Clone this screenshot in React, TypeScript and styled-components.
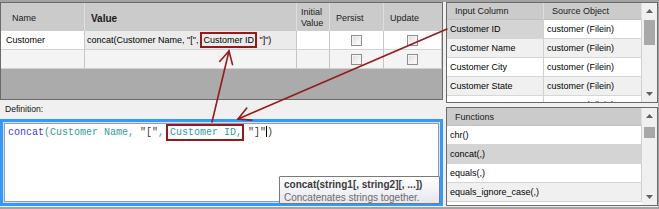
import React from 'react';
import styled, { createGlobalStyle } from 'styled-components';

const GlobalStyle = createGlobalStyle`
  html, body {
    margin: 0;
    padding: 0;
    background: #f0f0f0;
  }
  body {
    font-family: "Liberation Sans", Arial, sans-serif;
  }
`;

const RED = '#951b1b';

export default function App() {
  return (
    <>
      <GlobalStyle />
      <Frame>
        <LeftColumn>
          <FieldGrid>
            <HeadCell $pad={11}>Name</HeadCell>
            <HeadCell $pad={6} $bold>Value</HeadCell>
            <HeadCell $pad={4}>Initial<br />Value</HeadCell>
            <HeadCell $pad={6}>Persist</HeadCell>
            <HeadCell $pad={6}>Update</HeadCell>

            <BodyCell $bg="#ffffff" $pad={5}>Customer</BodyCell>
            <BodyCell $bg="#ebebeb" $pad={2}>
              concat(Customer Name, "[",<Mark>Customer ID</Mark> "]")
            </BodyCell>
            <BodyCell $bg="#ffffff" />
            <BodyCell $bg="#ffffff" $center><CheckBox /></BodyCell>
            <BodyCell $bg="#ffffff" $center><CheckBox /></BodyCell>

            <BodyCell $bg="#f4f4f4" />
            <BodyCell $bg="#f4f4f4" />
            <BodyCell $bg="#f4f4f4" />
            <BodyCell $bg="#f4f4f4" $center><CheckBox /></BodyCell>
            <BodyCell $bg="#f4f4f4" $center><CheckBox /></BodyCell>
          </FieldGrid>

          <DefLabel>Definition:</DefLabel>

          <DefBox>
            <CodeLine>
              <Kw>concat</Kw>
              <Ident>(Customer Name, </Ident>
              <Str>"["</Str>
              <Ident>,</Ident>
              <CodeMark><Ident>Customer ID,</Ident></CodeMark>
              <Str>"]"</Str>
              <Caret />
              <Str>)</Str>
            </CodeLine>
            <Tooltip>
              <TipTitle>concat(string1[, string2][, ...])</TipTitle>
              <TipText>Concatenates strings together.</TipText>
            </Tooltip>
          </DefBox>
        </LeftColumn>

        <RightColumn>
          <SidePanel $height={101}>
            <SideTable $cols="97px 98px" $head={17} $row={19}>
              <SideHead>Input Column</SideHead>
              <SideHead>Source Object</SideHead>

              <SideCell $bg="#d4d4d4">Customer ID</SideCell>
              <SideCell $bg="#ffffff">customer (Filein)</SideCell>
              <SideCell $bg="#f0f0f0">Customer Name</SideCell>
              <SideCell $bg="#f0f0f0">customer (Filein)</SideCell>
              <SideCell $bg="#ffffff">Customer City</SideCell>
              <SideCell $bg="#ffffff">customer (Filein)</SideCell>
              <SideCell $bg="#f0f0f0">Customer State</SideCell>
              <SideCell $bg="#f0f0f0">customer (Filein)</SideCell>
              <SideCell $bg="#ffffff">Customer ZIP</SideCell>
              <SideCell $bg="#ffffff">customer (Filein)</SideCell>
            </SideTable>
            <ScrollBar thumbTop={17} thumbHeight={25} />
          </SidePanel>

          <SidePanel $height={99}>
            <SideTable $cols="1fr" $head={18} $row={19}>
              <SideHead>Functions</SideHead>
              <SideCell $bg="#ffffff">chr()</SideCell>
              <SideCell $bg="#d4d4d4">concat(,)</SideCell>
              <SideCell $bg="#ffffff">equals(,)</SideCell>
              <SideCell $bg="#f0f0f0">equals_ignore_case(,)</SideCell>
            </SideTable>
            <ScrollBar thumbTop={19} thumbHeight={11} />
          </SidePanel>
        </RightColumn>

        <Arrows width="659" height="209" viewBox="0 0 659 209">
          <g stroke={RED} strokeWidth="1.6" fill="none" strokeLinecap="round">
            <line x1="212" y1="122" x2="229" y2="51" />
            <polyline points="219.7,61.5 229,51 232.5,64.6" />
            <line x1="447" y1="29" x2="238" y2="119" />
            <polyline points="251.9,120.1 238,119 246.8,108.1" />
          </g>
        </Arrows>
      </Frame>
    </>
  );
}

function CheckBox() {
  return <Box />;
}

function ScrollBar({ thumbTop, thumbHeight }: { thumbTop: number; thumbHeight: number }) {
  return (
    <Scroll>
      <ScrollArrow>
        <svg width="7" height="4" viewBox="0 0 7 4"><polygon points="0,4 3.5,0 7,4" fill="#606060" /></svg>
      </ScrollArrow>
      <Track>
        <Thumb style={{ top: thumbTop - 16, height: thumbHeight }} />
      </Track>
      <ScrollArrow>
        <svg width="7" height="4" viewBox="0 0 7 4"><polygon points="0,0 3.5,4 7,0" fill="#606060" /></svg>
      </ScrollArrow>
    </Scroll>
  );
}

const Frame = styled.div`
  position: relative;
  width: 659px;
  height: 209px;
  box-sizing: border-box;
  border-top: 2px solid #a3a3a3;
  border-right: 1px solid #a3a3a3;
  border-bottom: 2px solid #a3a3a3;
  padding-bottom: 1px;
  display: grid;
  grid-template-columns: 443px 212px;
  column-gap: 3px;
  background: #f0f0f0;
  font-family: "Liberation Sans", Arial, sans-serif;
  font-size: 9px;
  color: #000;
  overflow: hidden;
`;

const LeftColumn = styled.div`
  display: flex;
  flex-direction: column;
  min-height: 0;
`;

const RightColumn = styled.div`
  display: flex;
  flex-direction: column;
  gap: 4px;
  min-height: 0;
`;

const FieldGrid = styled.div`
  height: 98px;
  box-sizing: border-box;
  border: 1px solid #6a6a6a;
  background: #ababab;
  display: grid;
  grid-template-columns: 84px 212px 33px 54px 1fr;
  grid-template-rows: 28px 19px 19px;
  align-content: start;
  overflow: hidden;
`;

const HeadCell = styled.div<{ $pad: number; $bold?: boolean }>`
  display: flex;
  align-items: center;
  padding: 2px 0 0 ${p => p.$pad}px;
  background: #cbcbcb;
  border-right: 1px solid #dedede;
  font-size: ${p => (p.$bold ? 10 : 9)}px;
  font-weight: ${p => (p.$bold ? 700 : 400)};
  line-height: 11px;
  color: #1a1a1a;
  &:nth-child(5) {
    border-right: none;
  }
`;

const BodyCell = styled.div<{ $bg: string; $pad?: number; $center?: boolean }>`
  display: flex;
  align-items: center;
  justify-content: ${p => (p.$center ? 'center' : 'flex-start')};
  padding-left: ${p => p.$pad ?? 0}px;
  background: ${p => p.$bg};
  border-right: 1px solid #c6c6c6;
  border-bottom: 1px solid #d2d2d2;
  white-space: pre;
  overflow: hidden;
`;

const Mark = styled.span`
  border: 2px solid ${RED};
  padding: 1px 1px;
  margin-left: 2px;
`;

const Box = styled.span`
  width: 11px;
  height: 11px;
  box-sizing: border-box;
  border: 1px solid #8e8f8f;
  background: linear-gradient(135deg, #dadada 0%, #f6f6f6 70%, #ffffff 100%);
  box-shadow: inset 0 0 0 1px #f4f4f4;
`;

const DefLabel = styled.div`
  height: 19px;
  box-sizing: border-box;
  padding: 4px 0 0 5px;
  font-size: 8.6px;
  color: #111;
`;

const DefBox = styled.div`
  position: relative;
  flex: 1;
  box-sizing: border-box;
  border: 3px solid #3399ff;
  box-shadow: inset 0 0 0 1px #cfe3fa, inset 0 0 0 2px #9c9c9c;
  background: #ffffff;
  padding: 2px 5px;
`;

const CodeLine = styled.div`
  font-family: "Liberation Mono", "Courier New", monospace;
  font-size: 10px;
  line-height: 17px;
  white-space: pre;
`;

const Kw = styled.span`
  color: #3b3bf2;
`;

const Ident = styled.span`
  color: #2f9c9c;
`;

const Str = styled.span`
  color: #3a3a3a;
`;

const CodeMark = styled.span`
  border: 2px solid ${RED};
  padding: 1px 0 1px 2px;
  margin: 0 4px 0 2px;
`;

const Caret = styled.span`
  display: inline-block;
  width: 1px;
  height: 11px;
  background: #000;
  vertical-align: -2px;
`;

const Tooltip = styled.div`
  position: absolute;
  left: 276px;
  top: 54px;
  width: 161px;
  height: 28px;
  box-sizing: border-box;
  border: 1px solid #7a7a7a;
  border-radius: 1px;
  background: linear-gradient(#ffffff, #e6e7ef);
  padding: 1px 4px;
  font-size: 10px;
  line-height: 13px;
  white-space: nowrap;
`;

const TipTitle = styled.div`
  font-weight: 700;
  color: #3b3b3b;
`;

const TipText = styled.div`
  color: #6b6b6b;
`;

const SidePanel = styled.div<{ $height: number }>`
  height: ${p => p.$height}px;
  box-sizing: border-box;
  border: 1px solid #6a6a6a;
  background: #ffffff;
  display: grid;
  grid-template-columns: 1fr 15px;
  overflow: hidden;
`;

const SideTable = styled.div<{ $cols: string; $head: number; $row: number }>`
  display: grid;
  grid-template-columns: ${p => p.$cols};
  grid-template-rows: ${p => p.$head}px;
  grid-auto-rows: ${p => p.$row}px;
  align-content: start;
  overflow: hidden;
`;

const SideHead = styled.div`
  display: flex;
  align-items: center;
  padding-left: 8px;
  background: #cbcbcb;
  border-right: 1px solid #dedede;
  border-bottom: 1px solid #c0c0c0;
  color: #1a1a1a;
  white-space: nowrap;
`;

const SideCell = styled.div<{ $bg: string }>`
  display: flex;
  align-items: center;
  padding-left: 3px;
  background: ${p => p.$bg};
  border-right: 1px solid #d0d0d0;
  border-bottom: 1px solid #d6d6d6;
  white-space: nowrap;
  overflow: hidden;
`;

const Scroll = styled.div`
  display: flex;
  flex-direction: column;
  background: #f0f0f0;
`;

const ScrollArrow = styled.div`
  height: 16px;
  display: flex;
  align-items: center;
  justify-content: center;
  flex: none;
`;

const Track = styled.div`
  position: relative;
  flex: 1;
`;

const Thumb = styled.div`
  position: absolute;
  left: 2px;
  right: 2px;
  background: #a8a8a8;
`;

const Arrows = styled.svg`
  position: absolute;
  left: 0;
  top: -2px;
  pointer-events: none;
`;
